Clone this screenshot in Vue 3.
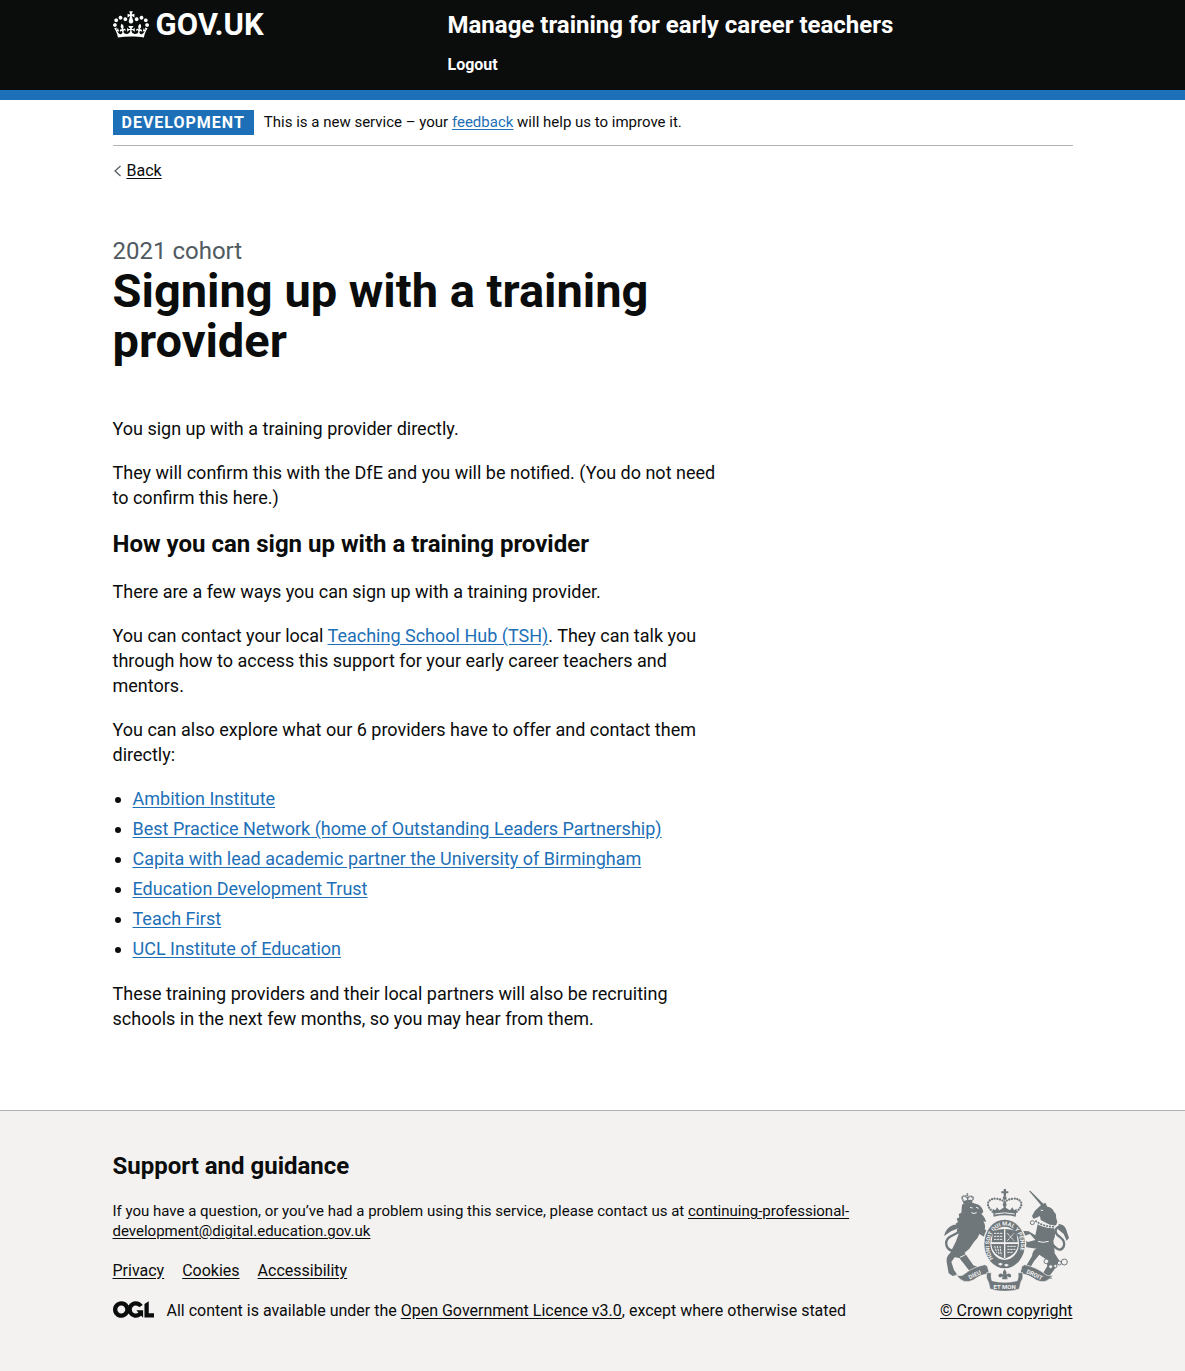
<script setup>
const providers = [
  'Ambition Institute',
  'Best Practice Network (home of Outstanding Leaders Partnership)',
  'Capita with lead academic partner the University of Birmingham',
  'Education Development Trust',
  'Teach First',
  'UCL Institute of Education',
]
const footerLinks = ['Privacy', 'Cookies', 'Accessibility']
</script>

<template>
  <div class="page">
    <header class="header">
      <div class="container header-row">
        <div class="header-logo">
          <a class="logo" href="#">
            <svg class="crown" viewBox="0 0 132 97" aria-hidden="true">
              <path fill="currentColor" fill-rule="evenodd" d="M25 30.2c3.5 1.5 7.7-.2 9.1-3.7 1.5-3.6-.2-7.8-3.9-9.2-3.6-1.4-7.6.3-9.1 3.9-1.4 3.5.3 7.5 3.9 9zM9 39.5c3.6 1.5 7.8-.2 9.2-3.7 1.5-3.6-.2-7.8-3.9-9.1-3.6-1.5-7.6.2-9.1 3.8-1.4 3.5.3 7.5 3.8 9zM4.4 57.2c3.5 1.5 7.7-.2 9.1-3.8 1.5-3.6-.2-7.7-3.9-9.1-3.5-1.5-7.6.3-9.1 3.8-1.4 3.5.3 7.6 3.9 9.1zm38.3-21.4c3.5 1.5 7.7-.2 9.1-3.8 1.5-3.6-.2-7.7-3.9-9.1-3.6-1.5-7.6.3-9.1 3.8-1.3 3.6.4 7.7 3.9 9.1zm64.4-5.6c-3.6 1.5-7.8-.2-9.1-3.7-1.5-3.6.2-7.8 3.8-9.2 3.6-1.4 7.7.3 9.2 3.9 1.3 3.5-.4 7.5-3.9 9zm15.9 9.3c-3.6 1.5-7.7-.2-9.1-3.7-1.5-3.6.2-7.8 3.7-9.1 3.6-1.5 7.7.2 9.2 3.8 1.5 3.5-.3 7.5-3.8 9zm4.7 17.7c-3.6 1.5-7.8-.2-9.2-3.8-1.5-3.6.2-7.7 3.9-9.1 3.6-1.5 7.7.3 9.2 3.8 1.3 3.5-.4 7.6-3.9 9.1zM89.3 35.8c-3.6 1.5-7.8-.2-9.2-3.8-1.4-3.6.2-7.7 3.9-9.1 3.6-1.5 7.7.3 9.2 3.8 1.4 3.6-.3 7.7-3.9 9.1zM69.7 17.7l8.9 4.7V9.3l-8.9 2.8c-.2-.3-.5-.6-.9-.9L72.4 0H59.6l3.5 11.2c-.3.3-.6.5-.9.9l-8.8-2.8v13.1l8.8-4.7c.3.3.6.7.9.9l-5 15.4v.1c-.2.8-.4 1.6-.4 2.4 0 4.1 3.1 7.5 7 8.1h.2c.3 0 .7.1 1 .1.4 0 .7 0 1-.1h.2c4-.6 7.1-4.1 7.1-8.1 0-.8-.1-1.7-.4-2.4V34l-5.1-15.4c.4-.2.7-.6 1-.9zM66 92.8c16.9 0 32.8 1.1 47.1 3.2 4-16.9 8.9-26.7 14-33.5l-9.6-3.4c1 4.9 1.1 7.2 0 10.2-1.5-1.4-3-4.3-4.2-8.7L108.6 76c2.8-2 5-3.2 7.5-3.3-4.4 9.4-10 11.9-13.6 11.2-4.3-.8-6.3-4.6-5.6-7.9 1-4.7 5.7-5.9 8-.5 4.3-8.7-3-11.4-7.6-8.8 7.1-7.2 7.9-13.5 2.1-21.1-8 6.1-8.1 12.3-4.5 20.8-4.7-5.4-12.1-2.5-9.5 6.2 3.4-5.2 7.9-2 7.2 3.1-.6 4.3-6.4 7.8-13.5 7.2-10.3-.9-10.9-8-11.2-13.8 2.5-.5 7.1 1.8 11 7.3L80.2 60c-4.1 4.4-8 5.3-12.3 5.4 1.4-4.4 8-11.6 8-11.6H55.5s6.4 7.2 7.9 11.6c-4.2-.1-8-1-12.3-5.4l1.4 16.4c3.9-5.5 8.5-7.7 10.9-7.3-.3 5.8-.9 12.8-11.1 13.8-7.2.6-12.9-2.9-13.5-7.2-.7-5 3.8-8.3 7.1-3.1 2.7-8.7-4.6-11.6-9.4-6.2 3.7-8.5 3.6-14.7-4.6-20.8-5.8 7.6-5 13.9 2.2 21.1-4.7-2.6-11.9.1-7.7 8.8 2.3-5.5 7.1-4.2 8.1.5.7 3.3-1.3 7.1-5.7 7.9-3.5.7-9-1.8-13.5-11.2 2.5.1 4.7 1.3 7.5 3.3l-4.7-15.4c-1.2 4.4-2.7 7.2-4.3 8.7-1.1-3-.9-5.3 0-10.2l-9.5 3.4c5 6.9 9.9 16.7 14 33.5 14.8-2.1 30.8-3.2 47.7-3.2z" />
            </svg>
            <span>GOV.UK</span>
          </a>
        </div>
        <div class="header-content">
          <a class="service-name" href="#">Manage training for early career teachers</a>
          <nav><a class="logout" href="#">Logout</a></nav>
        </div>
      </div>
    </header>

    <div class="container">
      <div class="phase-banner">
        <strong class="tag">Development</strong>
        <span>This is a new service – your <a href="#">feedback</a> will help us to improve it.</span>
      </div>

      <a class="back" href="#">
        <svg viewBox="0 0 9 14" aria-hidden="true"><path d="M7.500 2 2 7l5.500 5" fill="none" stroke="#505a5f" stroke-width="1.200" /></svg>
        <span>Back</span>
      </a>

      <main class="main">
        <span class="caption">2021 cohort</span>
        <h1>Signing up with a training provider</h1>
        <p>You sign up with a training provider directly.</p>
        <p>They will confirm this with the DfE and you will be notified. (You do not need to confirm this here.)</p>
        <h2>How you can sign up with a training provider</h2>
        <p>There are a few ways you can sign up with a training provider.</p>
        <p>You can contact your local <a href="#">Teaching School Hub (TSH)</a>. They can talk you through how to access this support for your early career teachers and mentors.</p>
        <p>You can also explore what our 6 providers have to offer and contact them directly:</p>
        <ul>
          <li v-for="name in providers" :key="name"><a href="#">{{ name }}</a></li>
        </ul>
        <p>These training providers and their local partners will also be recruiting schools in the next few months, so you may hear from them.</p>
      </main>
    </div>

    <footer class="footer">
      <div class="container footer-row">
        <div class="footer-main">
          <h2>Support and guidance</h2>
          <p>If you have a question, or you’ve had a problem using this service, please contact us at <a href="#">continuing-professional-development@digital.education.gov.uk</a></p>
          <ul class="footer-links">
            <li v-for="link in footerLinks" :key="link"><a href="#">{{ link }}</a></li>
          </ul>
          <div class="licence">
            <svg class="ogl" viewBox="0 0 483.2 195.7" aria-hidden="true">
              <path fill="currentColor" d="M421.5 142.8V.1l-50.7 32.3v161.1h112.4v-50.7zm-122.3-9.6A47.12 47.12 0 0 1 221 97.8c0-26 21.1-47.1 47.1-47.1 16.7 0 31.4 8.7 39.7 21.8l42.7-27.2A97.63 97.63 0 0 0 268.1 0c-36.5 0-68.3 20.1-85.1 49.7A98 98 0 0 0 97.8 0C43.9 0 0 43.9 0 97.8s43.9 97.8 97.8 97.8c36.5 0 68.3-20.1 85.1-49.7a97.76 97.76 0 0 0 149.6 25.4l19.4 22.2h3v-87.8h-80l24.3 27.5zM97.8 145c-26 0-47.1-21.1-47.1-47.1s21.1-47.1 47.1-47.1 47.1 21.1 47.1 47.1S123.8 145 97.8 145" />
            </svg>
            <span>All content is available under the <a href="#">Open Government Licence v3.0</a>, except where otherwise stated</span>
          </div>
        </div>

        <a class="copyright" href="#">
          <svg class="crest" viewBox="30 27 375 306" aria-hidden="true">
            <!-- tails -->
            <g fill="none" stroke="#6f777b" stroke-width="7" stroke-linecap="round">
              <path d="M76 210q-30 8-38-12-6-20 14-30l16-8q18-12 10-24" />
              <path d="M358 196q20 24 31 4 6-16-10-28-20-12-12-26 6-8 14-4" />
            </g>
            <path fill="#6f777b" d="M30 168q5-25 29-34l22 0-12 12-18 8zM374 132q17 2 22 15l9 27-7 8-9-20-17-14z" />

            <g fill="#6f777b">
              <!-- lion -->
              <path d="M84 74q20-12 36-4l14 4q12 8 14 22l-6 6q12 10 14 24l-8-2q8 12 4 24l12 8-2 10-12 4-14-8q-4 14-16 24l-14 20-14 12 26 38 16 6 4 10-22 4-10-4-30-38-14-2-10 14 8 24 10 14-14 4-12-8-6-34q-2-16 10-26l18-36 8-22-6-10 4-12-8-8 8-6-4-10 8-4-2-10 8-4z" />
              <path d="M86 64q15-7 30-4l-2 9q-12-3-25 3z" />
              <!-- unicorn -->
              <path d="M285 33l4-1 42 42-6 6z" />
              <path d="M334 68l6 12q16 2 20 16 8 6 6 16l4 14-4 10-12 2-34-18-2-12-12 6-8 2-4-8q6-16 20-26l8-8z" />
              <path d="M312 128q20 16 48 14 8 22-2 40 4 20 4 38l14 22-10 20-18 24 6 10-22 2-10-10 18-30-4-20-20-14-16 20-14 24-16 6 4-12 20-34q2-20 14-22l-30-4-14-12 4-12 14 8 22-6-16-18-18 6-12-8 4-8 22 2 20 12z" />
              <!-- crown -->
              <path d="M209 27h7v7h7v6h-7v8h-7v-8h-7v-6h7z" />
              <circle cx="212" cy="54" r="6" />
              <path d="M212 60l6 14-6 14-6-14z" />
              <path d="M176 86l8 5 5-9 7 9 8-5 8-6 8 6 8 5 7-9 5 9 8-5-3 24q-33-8-66 0z" />
            </g>
            <g fill="none" stroke="#6f777b" stroke-width="7" stroke-linecap="round" stroke-dasharray="0 8">
              <path d="M176 95q-20-18-12-30 8-11 24-9 16 3 24 10M248 95q20-18 12-30-8-11-24-9-16 3-24 10" />
            </g>
            <path d="M88 62q-8-12 2-14 8 0 11 8 4-10 13-6 7 4 1 10M100 40v8" fill="none" stroke="#6f777b" stroke-width="5" stroke-dasharray="4 1" />
            <path d="M304 122q22 18 56 18" fill="none" stroke="#f3f2f1" stroke-width="10" />
            <path d="M304 122q22 18 56 18" fill="none" stroke="#6f777b" stroke-width="5" stroke-dasharray="6 3" />
            <g fill="none" stroke="#f3f2f1" stroke-width="3">
              <path d="M108 82l8 2M126 82l8 3M112 98q8 5 16 0M78 232q14-4 24-16M320 90l7 2M312 184q14 6 32 0M182 102q30-7 60 0" />
            </g>

            <!-- garter and shield -->
            <ellipse cx="212" cy="192" rx="65" ry="77" fill="#f3f2f1" />
            <ellipse cx="212" cy="192" rx="61" ry="73" fill="#6f777b" />
            <ellipse cx="212" cy="190" rx="43" ry="50" fill="#f3f2f1" />
            <path id="garter-line" d="M178 236a47 60 0 1 1 68 3" fill="none" />
            <text fill="#f3f2f1" font-family="Roboto, sans-serif" font-size="17" font-weight="700"><textPath href="#garter-line">HONI SOIT QUI MAL Y PENSE</textPath></text>
            <g fill="#6f777b">
              <path d="M177 154q35-14 70 0l4 33h-78z" />
              <path d="M172 192h80q-2 32-40 44-38-12-40-44z" />
            </g>
            <path d="M212 148v86M171 190h82" stroke="#f3f2f1" stroke-width="4" />
            <path d="M180 160h26M180 169h26M180 178h26M220 160l20 22M220 182l20-22M220 199h26M220 208h24M220 217h18M182 198l6 20M190 198l5 24M198 198l4 28" fill="none" stroke="#f3f2f1" stroke-width="3" stroke-dasharray="7 2" />
            <path d="M192 252l7-4 8 4-8 5zM210 255l7-4 8 4-8 5z" fill="#f3f2f1" />

            <!-- chain -->
            <g fill="#f3f2f1" stroke="#6f777b" stroke-width="3">
              <circle cx="295" cy="128" r="6" /><circle cx="337" cy="244" r="7" /><circle cx="350" cy="260" r="6" />
              <circle cx="364" cy="258" r="5" /><circle cx="376" cy="249" r="6" /><circle cx="391" cy="246" r="9" />
            </g>

            <!-- motto ribbon -->
            <g fill="#6f777b" stroke="#f3f2f1" stroke-width="2">
              <path d="M66 284q16 8 28-4 22-18 58-26l8 4 6 22q-28 4-48 20-30 16-52-16z" />
              <path d="M358 284q-16 8-28-4-22-18-58-26l-8 4-6 22q28 4 48 20 30 16 52-16z" />
              <path d="M158 278l14 0q-2 14 2 24 38 10 76 0 4-10 2-24l14 0q4 16-6 30l-4 19q-44 14-88 0l-4-19q-10-14-6-30z" />
            </g>
            <path d="M212 268q-9 10-3 16-15-9-16 4 3 8 13 1l-2 9h17l-2-9q11 7 13-1-2-13-16-4 5-6-4-16z" fill="#6f777b" />
            <g fill="#f3f2f1" font-family="Roboto, sans-serif" font-size="18" font-weight="700" text-anchor="middle">
              <text transform="translate(125 290) rotate(-26)">DIEU</text>
              <text x="212" y="326">ET MON</text>
              <text transform="translate(299 290) rotate(26)">DROIT</text>
            </g>
          </svg>
          <span>© Crown copyright</span>
        </a>
      </div>
    </footer>
  </div>
</template>

<style>
body {
  margin: 0;
  background: #f3f2f1;
}
</style>

<style scoped>
.page {
  background: #fff;
  color: #0b0c0c;
  font-family: Roboto, "Liberation Sans", sans-serif;
  font-size: 18px;
  line-height: 25px;
}

.container {
  max-width: 960px;
  margin: 0 auto;
}

a {
  color: #1d70b8;
  text-underline-offset: 2px;
}

h1,
h2,
p,
ul {
  margin: 0;
  padding: 0;
}

h1 {
  margin-bottom: 50px;
  font-size: 47px;
  line-height: 50px;
}

h2 {
  margin-bottom: 20px;
  font-size: 24px;
  line-height: 30px;
}

.header {
  background: #0b0c0c;
  border-bottom: 10px solid #1d70b8;
}

.header-row {
  display: flex;
  padding: 10px 0 12px;
}

.header-logo {
  width: 335px;
}

.header-content {
  flex: 1;
}

.header a {
  color: #fff;
  font-weight: 700;
  text-decoration: none;
}

.logo {
  display: inline-flex;
  gap: 7px;
  font-size: 31px;
  line-height: 30px;
}

.crown {
  width: 36px;
  height: 27px;
  margin-top: 1px;
}

.service-name {
  display: block;
  margin-bottom: 12px;
  font-size: 24px;
  line-height: 30px;
}

.logout {
  display: block;
  font-size: 16px;
  line-height: 26px;
}

.phase-banner {
  display: flex;
  align-items: center;
  gap: 10px;
  padding: 10px 0;
  border-bottom: 1px solid #b1b4b6;
  font-size: 15px;
}

.tag {
  padding: 0 9px;
  background: #1d70b8;
  color: #fff;
  font-size: 16px;
  letter-spacing: 1px;
  text-transform: uppercase;
}

.back {
  display: inline-flex;
  align-items: center;
  gap: 5px;
  margin-top: 15px;
  color: #0b0c0c;
  font-size: 16px;
  line-height: 20px;
  text-decoration: none;
}

.back span {
  text-decoration: underline;
}

.back svg {
  width: 9px;
  height: 14px;
}

.main {
  max-width: 615px;
  padding: 52px 0 60px;
}

.caption {
  display: block;
  color: #505a5f;
  font-size: 24px;
  line-height: 30px;
}

.main p {
  margin-bottom: 19px;
}

.main ul {
  margin-bottom: 20px;
  padding-left: 20px;
}

.main li + li {
  margin-top: 5px;
}

.footer {
  padding: 40px 0 50px;
  border-top: 1px solid #b1b4b6;
  background: #f3f2f1;
  font-size: 16px;
  line-height: 20px;
}

.footer a {
  color: #0b0c0c;
}

.footer-row {
  display: flex;
  align-items: flex-end;
  justify-content: space-between;
  gap: 30px;
}

.footer-main {
  flex: 1;
}

.footer-main p {
  font-size: 15px;
}

.footer-main p,
.footer-links {
  margin-bottom: 20px;
}

.footer-links {
  display: flex;
  gap: 18px;
  list-style: none;
}

.licence {
  display: flex;
  align-items: flex-start;
  gap: 13px;
}

.ogl {
  width: 41px;
  height: 17px;
}

.copyright {
  display: flex;
  flex-direction: column;
  align-items: center;
  gap: 10px;
  white-space: nowrap;
}

.crest {
  width: 125px;
  height: 102px;
}
</style>
